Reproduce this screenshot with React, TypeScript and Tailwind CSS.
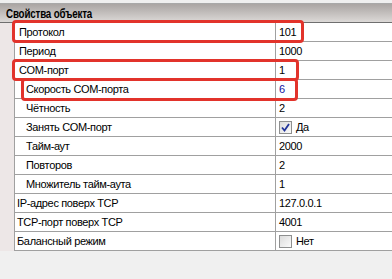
type Row = {
  name: string;
  value: string;
  indent: 'top' | 'sub' | 'tail';
  kind?: 'text' | 'blue' | 'check-on' | 'check-off';
};

const ROWS: Row[] = [
  { name: 'Протокол', value: '101', indent: 'top' },
  { name: 'Период', value: '1000', indent: 'top' },
  { name: 'COM-порт', value: '1', indent: 'top' },
  { name: 'Скорость COM-порта', value: '6', indent: 'sub', kind: 'blue' },
  { name: 'Чётность', value: '2', indent: 'sub' },
  { name: 'Занять COM-порт', value: 'Да', indent: 'sub', kind: 'check-on' },
  { name: 'Тайм-аут', value: '2000', indent: 'sub' },
  { name: 'Повторов', value: '2', indent: 'sub' },
  { name: 'Множитель тайм-аута', value: '1', indent: 'sub' },
  { name: 'IP-адрес поверх TCP', value: '127.0.0.1', indent: 'tail' },
  { name: 'TCP-порт поверх TCP', value: '4001', indent: 'tail' },
  { name: 'Балансный режим', value: 'Нет', indent: 'tail', kind: 'check-off' },
];

const indentClass = {
  top: 'pl-[4px]',
  sub: 'pl-[11px]',
  tail: 'pl-[2px]',
};

function CheckBox({ checked }: { checked: boolean }) {
  return (
    <span className="w-[13px] h-[13px] border border-[#8e8f8f] bg-gradient-to-br from-[#dcdcdc] to-[#fafafa] flex items-center justify-center shrink-0">
      {checked && (
        <svg width="9" height="9" viewBox="0 0 9 9">
          <path d="M1 4.5 L3.5 7.5 L8 1" fill="none" stroke="#21349a" strokeWidth="1.8" />
        </svg>
      )}
    </span>
  );
}

function Value({ row }: { row: Row }) {
  if (row.kind === 'check-on' || row.kind === 'check-off') {
    return (
      <div className="flex items-center gap-[4px]">
        <CheckBox checked={row.kind === 'check-on'} />
        <span>{row.value}</span>
      </div>
    );
  }
  return <span className={row.kind === 'blue' ? 'text-[#1010a0]' : ''}>{row.value}</span>;
}

export default function App() {
  return (
    <div
      className="relative w-[392px] h-[279px] bg-[#f0f0f0] overflow-hidden text-[11px] tracking-[-0.35px] text-black"
      style={{ fontFamily: '"Liberation Sans", Arial, sans-serif' }}
    >
      <div className="h-[3px] bg-[#efefef]" />
      <div className="h-[1px] bg-[#a8a8a8]" />
      <div className="h-[19px] bg-gradient-to-b from-[#aaa5a3] to-[#dcd9d7] border-b border-[#6f6f6f] flex items-center pl-[6px] text-[13px] font-bold leading-none">
        <span className="inline-block origin-left scale-x-[0.75] tracking-[-0.2px] whitespace-nowrap">Свойства объекта</span>
      </div>
      <div className="flex">
        <div className="w-[14px] bg-[#ede7e7]" />
        <div className="flex-1 border-l border-[#a0a0a0] bg-white">
          {ROWS.map((row) => (
            <div key={row.name} className="flex h-[19px] border-b border-[#a0a0a0]">
              <div className={`w-[260px] flex items-center ${indentClass[row.indent]}`}>{row.name}</div>
              <div className="flex-1 flex items-center border-l border-[#a0a0a0] pl-[3px]">
                <Value row={row} />
              </div>
            </div>
          ))}
        </div>
      </div>

      {/* red annotation frames */}
      <div className="absolute left-[12px] top-[20px] w-[292px] h-[23px] border-[3px] border-[#e2332b] rounded-[4px]" />
      <div className="absolute left-[12px] top-[59px] w-[287px] h-[22px] border-[3px] border-[#e2332b] rounded-[4px]" />
      <div className="absolute left-[21px] top-[78px] w-[277px] h-[23px] border-[3px] border-[#e2332b] rounded-[4px]" />
    </div>
  );
}
